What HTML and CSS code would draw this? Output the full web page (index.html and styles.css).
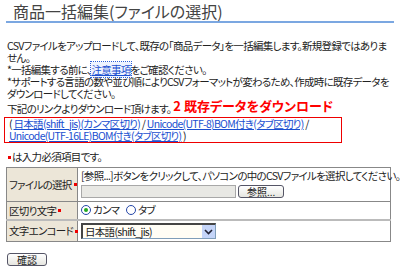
FILE: index.html
```html
<!DOCTYPE html>
<html lang="ja">
<head>
    <meta charset="UTF-8">
    <title>商品一括編集(ファイルの選択)</title>
    <link rel="stylesheet" href="styles.css">
</head>
<body>
    <h1 class="page-title">商品一括編集(ファイルの選択)</h1>

    <div class="intro">
        <p>CSVファイルをアップロードして、既存の「商品データ」を一括編集します。新規登録ではありません。</p>
        <p>*一括編集する前に、<a href="#" class="focus-link">注意事項</a>をご確認ください。</p>
        <p>*サポートする言語の数や並び順によりCSVフォーマットが変わるため、作成時に既存データをダウンロードしてください。</p>
        <p>下記のリンクよりダウンロード頂けます。<span class="callout">2 既存データをダウンロード</span></p>
        <div class="dl-links">
            ( <a href="#">日本語(shift_jis)(カンマ区切り)</a> / <a href="#">Unicode(UTF-8)BOM付き(タブ区切り)</a> /<br>
            <a href="#">Unicode(UTF-16LE)BOM付き(タブ区切り)</a> )
        </div>
    </div>

    <p class="note"><span class="req"></span>は入力必須項目です。</p>

    <table class="form-table">
        <tr class="row-file">
            <th>ファイルの選択<span class="req"></span></th>
            <td>
                <div class="hint">[参照...]ボタンをクリックして、パソコンの中のCSVファイルを選択してください。</div>
                <div class="file-row">
                    <span class="file-box"></span>
                    <button class="btn">参照...</button>
                </div>
            </td>
        </tr>
        <tr class="row-sep">
            <th>区切り文字<span class="req"></span></th>
            <td>
                <label class="radio"><span class="dot on"></span>カンマ</label>
                <label class="radio"><span class="dot"></span>タブ</label>
            </td>
        </tr>
        <tr>
            <th>文字エンコード<span class="req"></span></th>
            <td>
                <span class="select">日本語(shift_jis)<span class="arrow">
                    <svg width="9" height="6" viewBox="0 0 9 6"><path d="M1 1 L4.5 4.5 L8 1" fill="none" stroke="#223" stroke-width="1.6"/></svg>
                </span></span>
            </td>
        </tr>
    </table>

    <button class="btn btn-confirm">確認</button>
</body>
</html>
```

FILE: styles.css
```css
body { margin: 0; padding: 0 6px; background: #fff; color: #222; font-family: "Noto Sans CJK JP", "Noto Sans", sans-serif; font-size: 10.5px; letter-spacing: -0.7px; font-feature-settings: "palt"; }
p { margin: 0; }
a { color: #1a4fd0; text-decoration: underline; }

.page-title { margin: 0; padding: 1px 0 0 7px; font-size: 16px; font-weight: normal; color: #444; line-height: 20px; letter-spacing: 0; border-bottom: 2px solid #7ba7e1; }

.intro { margin-top: 17px; line-height: 12px; padding-left: 1px; }
.focus-link { outline: 1px dotted #2a5fd8; background: #eef4ff; }
.callout { margin-left: 2px; color: #f00; font-weight: bold; font-size: 13px; letter-spacing: 0; vertical-align: 2px; }
.dl-links { margin: 2px 0 0 -3px; width: 328px; border: 1px solid #e00; padding: 0 4px; line-height: 12px; }

.note { margin-top: 8px; line-height: 12px; }
.req { display: inline-block; width: 3px; height: 3px; background: #e00; margin: 0 1px 2px 2px; vertical-align: middle; }

.form-table { width: 385px; border-collapse: collapse; border: 1px solid #777; margin-top: 4px; table-layout: fixed; }
.form-table th, .form-table td { border: 1px solid #888; padding: 2px 3px; text-align: left; font-weight: normal; line-height: 12px; }
.form-table th { width: 66px; padding: 2px; background: #ece6d8; white-space: nowrap; }
.row-file td { padding: 2px 3px 3px; }
.form-table .row-sep td, .form-table .row-sep th { border-bottom: 2px solid #bbb; }

.hint { white-space: nowrap; }
.file-row { display: flex; gap: 2px; margin-top: 3px; }
.file-box { width: 153px; height: 11px; border: 1px solid #a8a8a8; background: #e8e8e4; }
.btn { font: inherit; font-size: 10px; letter-spacing: 0; padding: 0 8px; height: 13px; line-height: 11px; border: 1px solid #556; border-radius: 3px; background: linear-gradient(#fff, #e6e6e0); color: #222; }

.radio { display: inline-flex; align-items: center; margin-right: 5px; }
.dot { width: 8px; height: 8px; border: 1px solid #2446a8; border-radius: 50%; margin-right: 2px; background: #fff; position: relative; }
.dot.on::after { content: ""; position: absolute; left: 2px; top: 2px; width: 4px; height: 4px; border-radius: 50%; background: #2a2; }

.select { display: inline-flex; align-items: center; justify-content: space-between; width: 130px; height: 13px; border: 1px solid #7f9db9; border-top: 2px solid #444; border-left: 2px solid #444; padding-left: 2px; background: #fffdf5; vertical-align: middle; }
.arrow { display: flex; align-items: center; justify-content: center; width: 13px; height: 13px; background: #c4d4f8; }

.btn-confirm { display: block; margin: 11px 0 0 1px; width: 40px; height: 13px; padding: 0; }
```
